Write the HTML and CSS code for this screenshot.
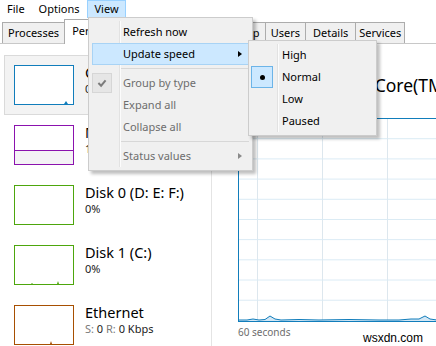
FILE: index.html
```html
<!DOCTYPE html>
<html lang="en">
  <head>
    <meta charset="UTF-8" />
    <meta name="viewport" content="width=device-width, initial-scale=1.0" />
    <title>Task Manager</title>
    <link rel="stylesheet" href="styles.css">
  </head>
  <body>
    <div class="menubar">
      <span class="menu-title">File</span>
      <span class="menu-title">Options</span>
      <span class="menu-title open">View</span>
    </div>

    <div class="tabs">
      <div class="tab first">Processes</div>
      <div class="tab active">Performance</div>
      <div class="tab">App history</div>
      <div class="tab">Startup</div>
      <div class="tab">Users</div>
      <div class="tab wide">Details</div>
      <div class="tab narrow">Services</div>
    </div>

    <div class="content">
      <div class="sidebar">
        <div class="resource selected">
          <div class="thumb cpu">
            <svg viewBox="0 0 58 38"><polygon points="49,38 51,35 53,38" /></svg>
          </div>
          <div class="info">
            <div class="name">CPU</div>
            <div class="value">0% 1.70 GHz</div>
          </div>
        </div>
        <div class="resource">
          <div class="thumb memory"><div class="mem-used"></div></div>
          <div class="info">
            <div class="name">Memory</div>
            <div class="value">1.4/3.9 GB (36%)</div>
          </div>
        </div>
        <div class="resource">
          <div class="thumb disk"></div>
          <div class="info">
            <div class="name">Disk 0 (D: E: F:)</div>
            <div class="value">0%</div>
          </div>
        </div>
        <div class="resource">
          <div class="thumb disk">
            <svg viewBox="0 0 58 38"><polygon points="16,38 17,37 18,38" /><polygon points="42,38 43,35 44,38" /></svg>
          </div>
          <div class="info">
            <div class="name">Disk 1 (C:)</div>
            <div class="value">0%</div>
          </div>
        </div>
        <div class="resource">
          <div class="thumb ethernet">
            <svg viewBox="0 0 58 38"><polygon points="35,38 36,35 37,38" /></svg>
          </div>
          <div class="info">
            <div class="name">Ethernet</div>
            <div class="value"><span class="dim">S:</span> 0 <span class="dim">R:</span> 0 Kbps</div>
          </div>
        </div>
      </div>

      <div class="detail">
        <div class="detail-head">
          <span class="detail-title">CPU</span>
          <span class="detail-model">Intel(R) Core(TM) i5-4210U CPU @ 1.70GHz</span>
        </div>
        <div class="graph">
          <svg class="usage" viewBox="0 0 200 8" preserveAspectRatio="none">
            <polygon points="0,8 0,7 8,7 14,6 20,7 26,6.5 31,3 36,6 42,7 60,6.5 80,7 110,6.5 140,7 160,7 172,6 180,6 186,3 191,6 198,7 200,7 200,8" />
            <polyline points="0,7 8,7 14,6 20,7 26,6.5 31,3 36,6 42,7 60,6.5 80,7 110,6.5 140,7 160,7 172,6 180,6 186,3 191,6 198,7 200,7" />
          </svg>
        </div>
        <div class="graph-caption">60 seconds</div>
      </div>
    </div>

    <div class="dropdown view-menu">
      <div class="menu-item">Refresh now</div>
      <div class="menu-item hover sub">Update speed</div>
      <div class="menu-sep"></div>
      <div class="menu-item disabled">
        <span class="check">
          <svg viewBox="0 0 20 20"><polyline points="6,10 9,13 14,7" /></svg>
        </span>
        Group by type
      </div>
      <div class="menu-item disabled">Expand all</div>
      <div class="menu-item disabled">Collapse all</div>
      <div class="menu-sep"></div>
      <div class="menu-item disabled sub">Status values</div>
    </div>

    <div class="dropdown speed-menu">
      <div class="menu-item">High</div>
      <div class="menu-item"><span class="radio"></span>Normal</div>
      <div class="menu-item">Low</div>
      <div class="menu-item">Paused</div>
    </div>

    <div class="watermark">wsxdn.com</div>
  </body>
</html>
```

FILE: styles.css
```css
body {
  margin: 0;
  width: 436px;
  height: 346px;
  overflow: hidden;
  position: relative;
  font-family: "Noto Sans", "Open Sans", sans-serif;
  font-size: 11px;
  color: #000;
  background-color: #fff;
}

/* menu bar */

.menubar {
  display: flex;
  height: 18px;
  background-color: #fff;
}

.menu-title {
  box-sizing: border-box;
  height: 18px;
  padding: 0 6px;
  line-height: 16px;
  border: 1px solid transparent;
}

.menu-title.open {
  margin-left: 1px;
  background-color: #cce8ff;
  border-color: #99d1ff;
}

/* tabs */

.tabs {
  display: flex;
  align-items: flex-end;
  height: 25px;
  padding-left: 2px;
  border-bottom: 1px solid #c8c8c8;
}

.tab {
  box-sizing: border-box;
  height: 21px;
  padding: 0 5px;
  margin-left: -1px;
  line-height: 19px;
  background-color: #f0f0f0;
  border: 1px solid #acacac;
  border-bottom: none;
  white-space: nowrap;
}

.tab.first {
  margin-left: 0;
}

.tab.wide {
  padding: 0 7px;
}

.tab.narrow {
  padding: 0 3px;
}

.tab.active {
  height: 25px;
  padding: 0 6px 0 7px;
  margin-bottom: -1px;
  line-height: 22px;
  background-color: #fff;
  position: relative;
}

/* main area */

.content {
  display: flex;
  height: 302px;
}

.sidebar {
  width: 211px;
  flex-shrink: 0;
  padding-top: 11px;
  border-right: 1px solid #e4e4e4;
}

.resource {
  display: flex;
  box-sizing: border-box;
  width: 200px;
  height: 60px;
  margin-left: 4px;
  padding: 9px 0 0 9px;
  border: 1px solid transparent;
}

.resource.selected {
  background-color: #f3f3f3;
  border-color: #dadada;
}

.thumb {
  box-sizing: border-box;
  width: 60px;
  height: 40px;
  flex-shrink: 0;
  background-color: #fff;
  border: 1px solid;
  display: flex;
  flex-direction: column;
  justify-content: flex-end;
}

.thumb svg {
  display: block;
  width: 58px;
  height: 38px;
}

.thumb.cpu {
  border-color: #117dbb;
  fill: #117dbb;
}

.thumb.memory {
  border-color: #8b12ae;
}

.mem-used {
  height: 13px;
  background-color: #f4f2f5;
  border-top: 1px solid #8b12ae;
}

.thumb.disk {
  border-color: #4da60c;
  fill: #4da60c;
}

.thumb.ethernet {
  border-color: #a74f01;
  fill: #a74f01;
}

.info {
  margin: -2px 0 0 11px;
  white-space: nowrap;
}

.name {
  font-size: 14.5px;
  line-height: 18px;
}

.value {
  font-size: 11px;
  line-height: 16px;
  color: #1a1a1a;
}

.dim {
  color: #7a7a7a;
}

.detail {
  flex: 1;
  min-width: 0;
  padding: 24px 0 0 26px;
}

.detail-head {
  display: flex;
  align-items: baseline;
  height: 30px;
  white-space: nowrap;
}

.detail-title {
  font-size: 22px;
}

.detail-model {
  margin-left: 30px;
  font-size: 17.5px;
}

.graph {
  box-sizing: border-box;
  width: 320px;
  height: 204px;
  margin-top: 20px;
  border: 1px solid #117dbb;
  display: flex;
  align-items: flex-end;
  background-image:
    linear-gradient(to top, #d9eaf4 1px, transparent 1px),
    linear-gradient(to right, #dde7ee 1px, transparent 1px);
  background-size: 100% 20.2px, 65px 100%;
  background-position: 0 0, 18px 0;
}

.usage {
  display: block;
  width: 200px;
  height: 8px;
}

.usage polygon {
  fill: #d3e7f5;
}

.usage polyline {
  fill: none;
  stroke: #117dbb;
  stroke-width: 1;
}

.graph-caption {
  margin-top: 3px;
  font-size: 10px;
  color: #6d6d6d;
}

/* dropdown menus */

.dropdown {
  position: absolute;
  box-sizing: border-box;
  padding: 3px;
  background-color: #f0f0f0;
  border: 1px solid #cccccc;
  box-shadow: 3px 3px 3px rgba(0, 0, 0, 0.25);
}

.dropdown::before {
  content: "";
  position: absolute;
  top: 3px;
  bottom: 3px;
  width: 1px;
  background-color: #e2e2e2;
  box-shadow: 1px 0 #fcfcfc;
}

.view-menu {
  left: 88px;
  top: 17px;
  width: 165px;
}

.view-menu::before {
  left: 30px;
}

.speed-menu {
  left: 248px;
  top: 40px;
  width: 129px;
}

.speed-menu::before {
  left: 28px;
}

.menu-item {
  position: relative;
  box-sizing: border-box;
  height: 22px;
  line-height: 20px;
  padding-left: 30px;
  border: 1px solid transparent;
  white-space: nowrap;
}

.speed-menu .menu-item {
  padding-left: 29px;
}

.menu-item.hover {
  background-color: #cce8ff;
  border-color: #a8d3f5;
}

.menu-item.disabled {
  color: #6d6d6d;
}

.menu-item.sub::after {
  content: "";
  position: absolute;
  right: 6px;
  top: 7px;
  border-left: 4px solid #000;
  border-top: 3.5px solid transparent;
  border-bottom: 3.5px solid transparent;
}

.menu-item.disabled.sub::after {
  border-left-color: #8a8a8a;
}

.menu-sep {
  height: 1px;
  margin: 3px 0 3px 27px;
  background-color: #d7d7d7;
}

.check {
  position: absolute;
  left: -1px;
  top: 0;
  box-sizing: border-box;
  width: 20px;
  height: 20px;
  background-color: #e6e6e6;
  border: 1px solid #d6d6d6;
}

.check svg {
  display: block;
  width: 18px;
  height: 18px;
  fill: none;
  stroke: #7c7c7c;
  stroke-width: 2.2;
}

.radio {
  position: absolute;
  left: -2px;
  top: -1px;
  box-sizing: border-box;
  width: 22px;
  height: 22px;
  background-color: #cce8ff;
  border: 1px solid #6cb4e8;
}

.radio::after {
  content: "";
  position: absolute;
  left: 8px;
  top: 8px;
  width: 5px;
  height: 5px;
  border-radius: 50%;
  background-color: #000;
}

.watermark {
  position: absolute;
  left: 363px;
  top: 331px;
  font-family: "Liberation Sans", Arial, sans-serif;
  font-size: 12px;
  color: #000;
}
```
